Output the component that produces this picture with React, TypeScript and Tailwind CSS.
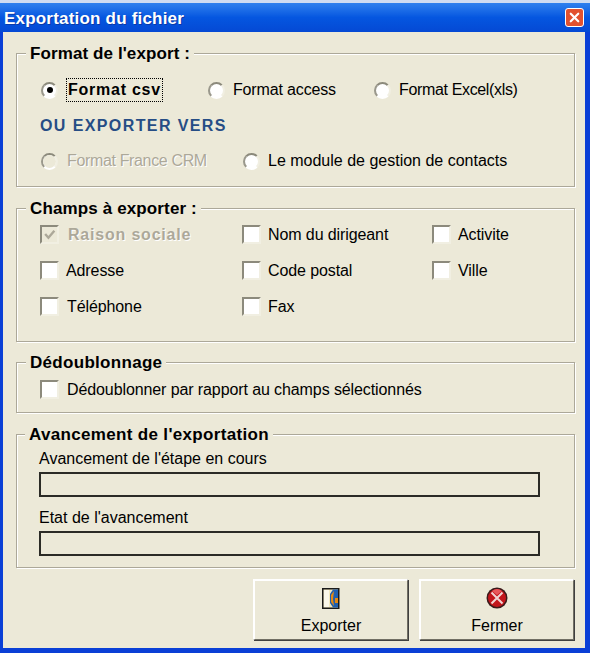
import type { ReactNode } from 'react'
import { X } from 'lucide-react'

const font = "font-['Liberation_Sans',Arial,sans-serif]"

function Group({ title, titleClass, className, children }: { title: string; titleClass: string; className: string; children: ReactNode }) {
  return (
    <section className={`border border-[#aca899] shadow-[1px_1px_0_#fff,inset_1px_1px_0_#fff] ${className}`}>
      <h2 className={`-mt-[10px] ml-[9px] h-[20px] w-fit bg-[#ece9d8] px-[4px] text-[17px] leading-[20px] font-bold text-black ${titleClass}`}>
        {title}
      </h2>
      {children}
    </section>
  )
}

function Radio({ checked, disabled }: { checked?: boolean; disabled?: boolean }) {
  return (
    <span className="flex h-[17px] w-[17px] shrink-0 items-center justify-center rounded-full border-2 border-t-[#8c8a7c] border-r-[#f1efe2] border-b-white border-l-[#9a988c] bg-white">
      {checked && <span className="h-[6px] w-[6px] rounded-full bg-black" />}
      {disabled && <span className="h-full w-full rounded-full bg-[#ece9d8]" />}
    </span>
  )
}

function RadioOption({ label, className, labelClass = '', gap, checked, disabled, focused }: {
  label: string
  className: string
  labelClass?: string
  gap: string
  checked?: boolean
  disabled?: boolean
  focused?: boolean
}) {
  return (
    <div className={`flex items-center ${gap} ${className}`}>
      <Radio checked={checked} disabled={disabled} />
      <span
        className={`text-[16px] leading-[20px] whitespace-nowrap ${labelClass} ${disabled ? 'text-[#aca899] [text-shadow:1px_1px_0_#fff]' : 'text-black'} ${
          focused ? 'outline-1 outline-offset-1 outline-dotted outline-black font-bold tracking-[0.75px]' : ''
        }`}
      >
        {label}
      </span>
    </div>
  )
}

function Check({ label, checked, disabled, gap = 'gap-[7px]' }: { label: string; checked?: boolean; disabled?: boolean; gap?: string }) {
  return (
    <div className={`flex h-[19px] items-center ${gap}`}>
      <span
        className={`flex h-[19px] w-[19px] shrink-0 items-center justify-center border-2 border-t-[#8c8a7c] border-r-[#f1efe2] border-b-[#f1efe2] border-l-[#8c8a7c] ${
          disabled ? 'bg-[#ece9d8]' : 'bg-white'
        }`}
      >
        {checked && (
          <svg viewBox="0 0 12 12" className="h-[13px] w-[13px]">
            <path d="M2 5.5 L5 9 L10.5 2.5" fill="none" stroke="#aca899" strokeWidth="2.2" />
          </svg>
        )}
      </span>
      <span
        className={`text-[16px] leading-[20px] whitespace-nowrap ${
          disabled ? 'font-bold tracking-[0.8px] text-[#aca899] [text-shadow:1px_1px_0_#fff]' : 'tracking-[-0.1px] text-black'
        }`}
      >
        {label}
      </span>
    </div>
  )
}

function Progress({ label, className }: { label: string; className: string }) {
  return (
    <div className={className}>
      <div className="h-[20px] text-[16px] leading-[20px] text-black">{label}</div>
      <div className="mt-[3px] h-[25px] w-[501px] border-2 border-[#2b2b26] bg-[#ece9d8]" />
    </div>
  )
}

function XpButton({ label, icon }: { label: string; icon: ReactNode }) {
  return (
    <button
      type="button"
      className="flex h-[61px] w-[155px] flex-col items-center border border-t-2 border-l-2 border-t-white border-r-[#716f64] border-b-[#716f64] border-l-white bg-[#ece9d8] pt-[6px] shadow-[1px_1px_0_#404040]"
    >
      <span className="flex h-[22px] items-center justify-center">{icon}</span>
      <span className="mt-[7px] text-[16px] leading-[20px] text-black">{label}</span>
    </button>
  )
}

function DoorIcon() {
  return (
    <svg width="18" height="21" viewBox="0 0 18 21">
      <rect x="0.75" y="0.75" width="16" height="19.5" fill="#f3e9c0" stroke="#1a1a1a" strokeWidth="1.5" />
      <path d="M2 2 H7 V19 H2 Z" fill="#fbf8ea" />
      <path d="M11 1.5 H16 V19.5 H11 L8 15 V6 Z" fill="#1f5fae" />
      <path d="M12 3 L9 7 V14 L12 18 L11 11 Z" fill="#e58a12" />
      <path d="M13 10 H16 V15 H13 Z" fill="#e58a12" />
    </svg>
  )
}

function CloseIcon() {
  return (
    <svg width="22" height="22" viewBox="0 0 22 22">
      <circle cx="11" cy="11" r="10.5" fill="#3a1a1a" />
      <circle cx="11" cy="11" r="9" fill="#c2161c" />
      <path d="M6 4 A8 8 0 0 1 16 4 L11 8 Z" fill="#e8575b" />
      <path d="M5.5 5.5 L16.5 16.5 M16.5 5.5 L5.5 16.5" stroke="#f0d4d4" strokeWidth="2" />
    </svg>
  )
}

export default function App() {
  return (
    <div className={`${font} flex h-[653px] w-[590px] flex-col overflow-hidden bg-[#0a3fd6]`}>
      <div className="h-[3px] shrink-0 bg-[#cfdcf2]" />
      <header className="flex h-[29px] shrink-0 items-center justify-between bg-gradient-to-b from-[#2f80ee] via-[#0556e0] to-[#0549d4] pr-[6px] pl-[4px]">
        <h1 className="mt-[2px] text-[17px] leading-[20px] font-bold tracking-[0.2px] text-white [text-shadow:1px_1px_0_#0b3aa8]">
          Exportation du fichier
        </h1>
        <button
          type="button"
          aria-label="Fermer"
          className="flex h-[19px] w-[19px] items-center justify-center rounded-[3px] border border-white bg-[#e2512f] text-white"
        >
          <X size={15} strokeWidth={3.5} />
        </button>
      </header>

      <main className="mr-[5px] mb-[5px] ml-[3px] flex flex-1 flex-col bg-[#ece9d8] pt-[21px] pl-[13px]">
        <Group title="Format de l'export :" titleClass="tracking-[0.1px]" className="h-[134px] w-[559px]">
          <div className="mt-[16px] flex h-[20px] items-center pl-[24px]">
            <RadioOption label="Format csv" className="w-[167px]" gap="gap-[10px]" checked focused />
            <RadioOption label="Format access" className="w-[166px]" labelClass="tracking-[-0.15px]" gap="gap-[8px]" />
            <RadioOption label="Format Excel(xls)" className="w-[160px]" labelClass="tracking-[-0.35px]" gap="gap-[8px]" />
          </div>
          <div className="mt-[16px] pl-[23px] text-[16px] leading-[20px] font-bold tracking-[1.4px] text-[#264d85]">
            OU EXPORTER VERS
          </div>
          <div className="mt-[15px] flex h-[20px] items-center pl-[24px]">
            <RadioOption label="Format France CRM" className="w-[202px]" labelClass="tracking-[-0.35px]" gap="gap-[9px]" disabled />
            <RadioOption label="Le module de gestion de contacts" className="w-[300px]" gap="gap-[8px]" />
          </div>
        </Group>

        <Group title="Champs à exporter :" titleClass="tracking-[0.13px]" className="mt-[21px] h-[134px] w-[559px]">
          <div className="mt-[6px] grid grid-cols-[202px_190px_120px] gap-y-[17px] pl-[23px]">
            <Check label="Raison sociale" checked disabled gap="gap-[9px]" />
            <Check label="Nom du dirigeant" />
            <Check label="Activite" />
            <Check label="Adresse" />
            <Check label="Code postal" />
            <Check label="Ville" />
            <Check label="Téléphone" gap="gap-[8px]" />
            <Check label="Fax" />
          </div>
        </Group>

        <Group title="Dédoublonnage" titleClass="tracking-[0.3px]" className="mt-[20px] h-[51px] w-[559px]">
          <div className="mt-[7px] pl-[23px]">
            <Check label="Dédoublonner par rapport au champs sélectionnés" gap="gap-[8px]" />
          </div>
        </Group>

        <Group title="Avancement de l'exportation" titleClass="-translate-x-[1px] tracking-[0.33px]" className="mt-[21px] h-[134px] w-[559px]">
          <div className="pl-[22px]">
            <Progress label="Avancement de l'étape en cours" className="mt-[4px]" />
            <Progress label="Etat de l'avancement" className="mt-[11px]" />
          </div>
        </Group>

        <div className="mt-[11px] flex w-[558px] justify-end gap-[11px]">
          <XpButton label="Exporter" icon={<DoorIcon />} />
          <XpButton label="Fermer" icon={<CloseIcon />} />
        </div>
      </main>
    </div>
  )
}
